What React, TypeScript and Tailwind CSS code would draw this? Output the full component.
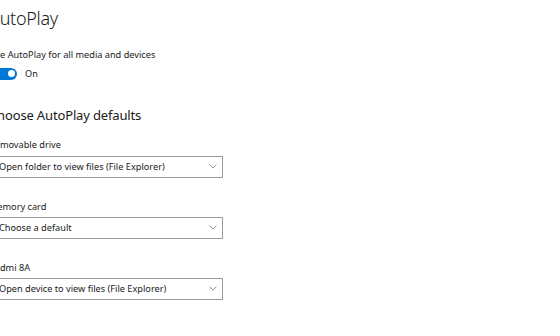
import React from "react";

function Select({ value }: { value: string }) {
  return (
    <div className="flex h-[22px] w-[234px] items-center justify-between border-[1.5px] border-[#9a9a9a] bg-white pl-[9px] pr-[5px]">
      <span className="text-[9.2px] text-[#1a1a1a]">{value}</span>
      <svg width="8" height="5" viewBox="0 0 8 5" fill="none">
        <path d="M0.5 0.5 L4 4 L7.5 0.5" stroke="#8a8a8a" strokeWidth="0.9" />
      </svg>
    </div>
  );
}

export default function App() {
  return (
    <div
      className="h-[336px] w-[560px] overflow-hidden bg-white text-[#1a1a1a]"
      style={{ fontFamily: '"Noto Sans", "Open Sans", sans-serif' }}
    >
      <div className="ml-[-11px] flex flex-col pt-[5px]">
        <h1 className="text-[18px] font-light leading-[26px] tracking-[-0.3px]">AutoPlay</h1>
        <p className="mt-[17px] text-[9.2px] leading-[14px]">Use AutoPlay for all media and devices</p>
        <div className="mt-[5px] flex items-center gap-[8px]">
          <div className="flex h-[12px] w-[28px] items-center justify-end rounded-full bg-[#0078d7] pr-[2px]">
            <div className="h-[7px] w-[7px] rounded-full bg-white" />
          </div>
          <span className="text-[9.2px]">On</span>
        </div>
        <h2 className="mt-[25px] text-[13px] leading-[18px] tracking-[-0.15px]">Choose AutoPlay defaults</h2>
        <p className="mt-[14px] text-[9.2px] leading-[14px]">Removable drive</p>
        <div className="mt-[4px]">
          <Select value="Open folder to view files (File Explorer)" />
        </div>
        <p className="mt-[22px] text-[9.2px] leading-[14px]">Memory card</p>
        <div className="mt-[3px]">
          <Select value="Choose a default" />
        </div>
        <p className="mt-[22px] text-[9.2px] leading-[14px]">Redmi 8A</p>
        <div className="mt-[3px]">
          <Select value="Open device to view files (File Explorer)" />
        </div>
      </div>
    </div>
  );
}
